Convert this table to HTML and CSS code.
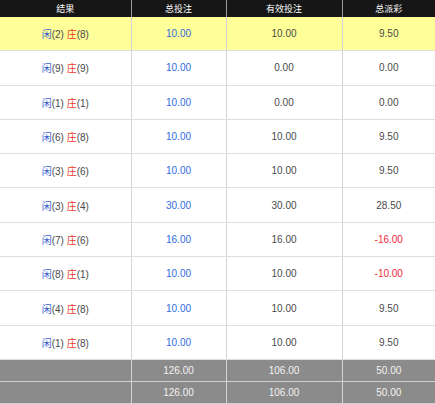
FILE: index.html
```html
<!DOCTYPE html>
<html>
<head>
<meta charset="utf-8">
<link rel="stylesheet" href="styles.css">
</head>
<body>
<table class="grid">
  <colgroup>
    <col class="c1"><col class="c2"><col class="c3"><col class="c4">
  </colgroup>
  <thead>
    <tr class="head"><th>结果</th><th>总投注</th><th>有效投注</th><th>总派彩</th></tr>
  </thead>
  <tbody>
    <tr class="row hl"><td><span class="p">闲</span>(2) <span class="b">庄</span>(8)</td><td class="bet">10.00</td><td>10.00</td><td>9.50</td></tr>
    <tr class="row"><td><span class="p">闲</span>(9) <span class="b">庄</span>(9)</td><td class="bet">10.00</td><td>0.00</td><td>0.00</td></tr>
    <tr class="row"><td><span class="p">闲</span>(1) <span class="b">庄</span>(1)</td><td class="bet">10.00</td><td>0.00</td><td>0.00</td></tr>
    <tr class="row"><td><span class="p">闲</span>(6) <span class="b">庄</span>(8)</td><td class="bet">10.00</td><td>10.00</td><td>9.50</td></tr>
    <tr class="row"><td><span class="p">闲</span>(3) <span class="b">庄</span>(6)</td><td class="bet">10.00</td><td>10.00</td><td>9.50</td></tr>
    <tr class="row"><td><span class="p">闲</span>(3) <span class="b">庄</span>(4)</td><td class="bet">30.00</td><td>30.00</td><td>28.50</td></tr>
    <tr class="row"><td><span class="p">闲</span>(7) <span class="b">庄</span>(6)</td><td class="bet">16.00</td><td>16.00</td><td class="neg">-16.00</td></tr>
    <tr class="row"><td><span class="p">闲</span>(8) <span class="b">庄</span>(1)</td><td class="bet">10.00</td><td>10.00</td><td class="neg">-10.00</td></tr>
    <tr class="row"><td><span class="p">闲</span>(4) <span class="b">庄</span>(8)</td><td class="bet">10.00</td><td>10.00</td><td>9.50</td></tr>
    <tr class="row"><td><span class="p">闲</span>(1) <span class="b">庄</span>(8)</td><td class="bet">10.00</td><td>10.00</td><td>9.50</td></tr>
  </tbody>
  <tfoot>
    <tr class="sum"><td></td><td>126.00</td><td>106.00</td><td>50.00</td></tr>
    <tr class="sum"><td></td><td>126.00</td><td>106.00</td><td>50.00</td></tr>
  </tfoot>
</table>
</body>
</html>
```
FILE: styles.css
```css
html, body {
  margin: 0;
  padding: 0;
  background: #ffffff;
}
.grid {
  width: 435px;
  border-collapse: collapse;
  table-layout: fixed;
  font-family: "Liberation Sans", Arial, "Noto Sans CJK SC", sans-serif;
  font-size: 10px;
  color: #4a4a4a;
}
.c1 { width: 131px; }
.c2 { width: 95px; }
.c3 { width: 116px; }
.c4 { width: 93px; }
.grid th, .grid td {
  text-align: center;
  padding: 0;
  border-left: 1px solid #d4d4d4;
  border-right: 1px solid #d4d4d4;
}
.grid th:first-child, .grid td:first-child { border-left: none; }
.grid th:last-child, .grid td:last-child { border-right: none; }
.head th {
  background: #161616;
  color: #ffffff;
  font-weight: normal;
  font-size: 9px;
  height: 17px;
  border-left-color: #9a9a9a;
  border-right-color: #9a9a9a;
}
.row td {
  height: 33.3px;
  border-bottom: 1px solid #dedede;
}
.row.hl td { background: #ffff99; }
.p { color: #3a62d0; }
.b { color: #ef3a2a; }
.bet { color: #2f6ce0; }
.neg { color: #f0283a; }
.sum td {
  background: #8b8b8b;
  color: #f2f2f2;
  height: 21px;
  border-bottom: 1px solid #d0d0d0;
}
```
